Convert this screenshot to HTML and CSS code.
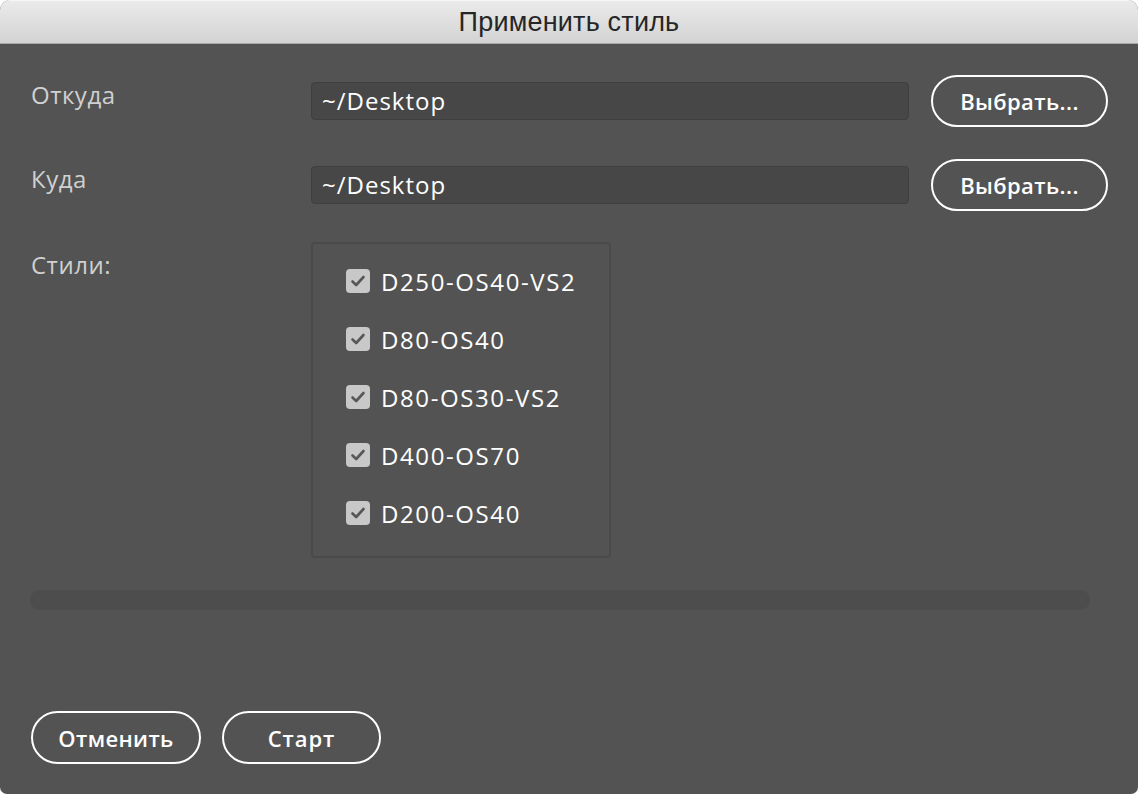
FILE: index.html
```html
<!DOCTYPE html>
<html lang="ru">
<head>
<meta charset="utf-8">
<title>Применить стиль</title>
<link rel="stylesheet" href="styles.css">
</head>
<body>
<div class="window">
  <div class="titlebar">Применить стиль</div>
  <div class="content">
    <div class="row">
      <div class="label">Откуда</div>
      <div class="field">~/Desktop</div>
      <button class="btn btn-choose">Выбрать...</button>
    </div>
    <div class="row row-2">
      <div class="label">Куда</div>
      <div class="field">~/Desktop</div>
      <button class="btn btn-choose">Выбрать...</button>
    </div>
    <div class="styles-row">
      <div class="label">Стили:</div>
      <div class="styles-box">
        <label class="item"><span class="check"><svg viewBox="0 0 24 24"><path d="M6.5 12.5 L10.2 16 L17.5 8" /></svg></span>D250-OS40-VS2</label>
        <label class="item"><span class="check"><svg viewBox="0 0 24 24"><path d="M6.5 12.5 L10.2 16 L17.5 8" /></svg></span>D80-OS40</label>
        <label class="item"><span class="check"><svg viewBox="0 0 24 24"><path d="M6.5 12.5 L10.2 16 L17.5 8" /></svg></span>D80-OS30-VS2</label>
        <label class="item"><span class="check"><svg viewBox="0 0 24 24"><path d="M6.5 12.5 L10.2 16 L17.5 8" /></svg></span>D400-OS70</label>
        <label class="item"><span class="check"><svg viewBox="0 0 24 24"><path d="M6.5 12.5 L10.2 16 L17.5 8" /></svg></span>D200-OS40</label>
      </div>
    </div>
    <div class="progress"></div>
    <div class="footer">
      <button class="btn btn-cancel">Отменить</button>
      <button class="btn btn-start">Старт</button>
    </div>
  </div>
</div>
</body>
</html>
```

FILE: styles.css
```css
* { box-sizing: border-box; }
html, body {
  margin: 0;
  padding: 0;
  background: #ffffff;
}
.window {
  width: 1138px;
  height: 794px;
  background: #535353;
  border-radius: 10px 10px 7px 7px;
  overflow: hidden;
  display: flex;
  flex-direction: column;
  font-family: "Open Sans", "Noto Sans", sans-serif;
}
.titlebar {
  height: 44px;
  flex: none;
  background: linear-gradient(#ebebeb, #d3d3d3);
  border-bottom: 1px solid #a9a9a9;
  box-shadow: inset 0 1px 0 #f6f6f6;
  color: #262626;
  font-family: "Liberation Sans", Arial, sans-serif;
  font-size: 27px;
  line-height: 44px;
  text-align: center;
  letter-spacing: 0.2px;
}
.content {
  flex: 1;
  display: flex;
  flex-direction: column;
  padding: 31px 30px 30px 30px;
}
.row {
  display: grid;
  grid-template-columns: 259px 598px 177px;
  column-gap: 22px;
  align-items: center;
  height: 52px;
}
.row-2 { margin-top: 32px; }
.label {
  color: #d0d0d0;
  font-size: 24px;
  line-height: 30px;
  letter-spacing: 0.5px;
  padding-left: 1px;
  align-self: start;
  margin-top: 5px;
}
.field {
  height: 38px;
  background: #474747;
  border: 1px solid #3f3f3f;
  border-radius: 4px;
  color: #ffffff;
  font-size: 24px;
  line-height: 36px;
  letter-spacing: 1px;
  padding-left: 10px;
  margin-top: -1px;
}
.btn {
  font-family: "Open Sans", "Noto Sans", sans-serif;
  font-weight: 600;
  font-size: 22px;
  letter-spacing: 0.4px;
  color: #ffffff;
  background: transparent;
  border: 2px solid #ffffff;
  border-radius: 27px;
  padding: 0;
  cursor: pointer;
}
.btn-choose {
  height: 52px;
  width: 177px;
}
.styles-row {
  display: grid;
  grid-template-columns: 281px 300px;
  margin-top: 31px;
}
.styles-row .label { margin-top: 8px; }
.styles-box {
  height: 316px;
  border: 2px solid #4a4a4a;
  border-radius: 4px;
  padding: 8px 0 14px 33px;
  display: flex;
  flex-direction: column;
}
.item {
  height: 58px;
  display: flex;
  align-items: center;
  color: #ffffff;
  font-size: 24px;
  letter-spacing: 1.6px;
}
.check {
  width: 24px;
  height: 24px;
  border-radius: 4px;
  background: #c8c8c8;
  margin-right: 11px;
  display: flex;
}
.check svg {
  width: 24px;
  height: 24px;
  fill: none;
  stroke: #575757;
  stroke-width: 2.6;
  stroke-linecap: round;
  stroke-linejoin: round;
}
.progress {
  margin-top: 32px;
  height: 20px;
  border-radius: 10px;
  background: #4d4d4d;
  margin-right: 18px;
}
.footer {
  margin-top: auto;
  display: flex;
  gap: 21px;
  padding-left: 1px;
}
.btn-cancel {
  width: 170px;
  height: 53px;
}
.btn-start {
  width: 159px;
  height: 53px;
  letter-spacing: 0.9px;
}
```
